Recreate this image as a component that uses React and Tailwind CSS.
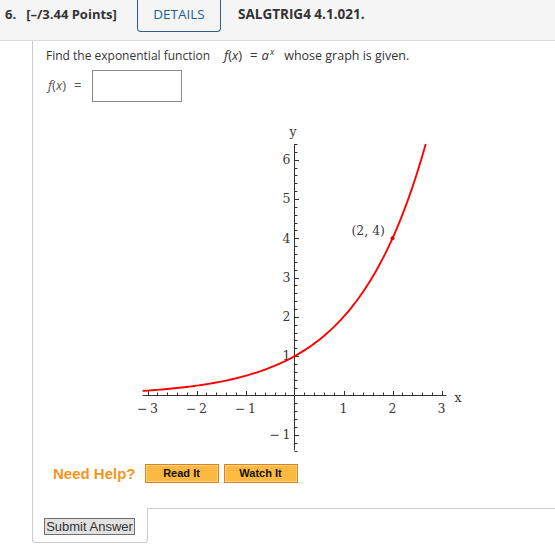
import React from "react";

const OX = 294.5;
const OY = 393.5;
const UX = 49;
const UY = 39.3;
const px = (x) => OX + x * UX;
const py = (y) => OY - y * UY;

function Graph() {
  const xTicks = [];
  for (let i = -15; i <= 15; i++) {
    if (i === 0) continue;
    const major = i % 5 === 0;
    const x = Math.round(px(i * 0.2)) + 0.5;
    xTicks.push(<line key={"x" + i} x1={x} x2={x} y1={OY} y2={OY - (major ? 4.5 : 3)} stroke="#333" strokeWidth="1" />);
  }
  const yTicks = [];
  for (let j = -7; j <= 32; j++) {
    if (j === 0) continue;
    const major = j % 5 === 0;
    const y = Math.round(py(j * 0.2)) + 0.5;
    yTicks.push(<line key={"y" + j} x1={OX} x2={OX + (major ? 4.5 : 3)} y1={y} y2={y} stroke="#333" strokeWidth="1" />);
  }
  const pts = [];
  const xEnd = Math.log2(6.4);
  for (let x = -3.1; x < xEnd; x += 0.05) pts.push([px(x), py(Math.pow(2, x))]);
  pts.push([px(xEnd), py(6.4)]);
  const d = pts.map((p, k) => (k ? "L" : "M") + p[0].toFixed(2) + " " + p[1].toFixed(2)).join(" ");
  const font = { fontFamily: "'DejaVu Serif', 'Liberation Serif', serif", fontSize: 12.5, fill: "#3a3a3a" };
  const neg = (v) => (v < 0 ? "\u2212" + "\u2009" + -v : String(v));
  return (
    <svg width="340" height="340" viewBox="130 112 340 340" className="block">
      <line x1={px(-3.1)} x2={px(3.1)} y1={OY} y2={OY} stroke="#333" strokeWidth="1" />
      <line x1={OX} x2={OX} y1={py(6.4)} y2={py(-1.4)} stroke="#333" strokeWidth="1" />
      {xTicks}
      {yTicks}
      {[-3, -2, -1, 1, 2, 3].map((v) => (
        <text key={"lx" + v} x={px(v)} y={411} textAnchor="middle" style={font}>
          {neg(v)}
        </text>
      ))}
      {[-1, 1, 2, 3, 4, 5, 6].map((v) => (
        <text key={"ly" + v} x={290.5} y={py(v) + 4.2} textAnchor="end" style={font}>
          {neg(v)}
        </text>
      ))}
      <text x={293} y={133.5} textAnchor="middle" style={font}>y</text>
      <text x={458} y={399.5} textAnchor="middle" style={font}>x</text>
      <path d={d} fill="none" stroke="#ff0000" strokeWidth="1.9" />
      <circle cx={px(2)} cy={py(4)} r="2" fill="#e00000" />
      <text x={385} y={233} textAnchor="end" style={font}>(2, 4)</text>
    </svg>
  );
}

export default function App() {
  return (
    <div className="w-[555px] h-[547px] bg-white overflow-hidden font-['Open_Sans',sans-serif] text-[#333]">
      <div className="h-[41px] bg-[#f5f5f5] border-b border-[#dcdcdc] flex items-start">
        <div className="w-[137px] shrink-0 pl-[5px] pt-[5px] text-[13px] leading-[18px] font-bold text-[#333] flex">
          <span>6.</span>
          <span className="ml-[10px]">[–/3.44 Points]</span>
        </div>
        <div className="w-[84px] shrink-0 h-[32px] border border-t-0 border-[#2b5d8c] rounded-b-[4px] flex justify-center pt-[5px] text-[13.5px] leading-[18px] font-medium text-[#1d5f96]">
          DETAILS
        </div>
        <div className="ml-[17px] pt-[5px] text-[13.5px] leading-[18px] font-bold text-[#333]">SALGTRIG4 4.1.021.</div>
      </div>
      <div className="ml-[32px]">
        <div className="border-l border-[#cccccc] pl-[13px] pt-[5px] pb-[23px]">
          <div className="text-[12px] leading-[18px] text-[#333] flex items-baseline whitespace-pre">
            <span>Find the exponential function</span>
            <span className="ml-[14px] text-[13px]">
              <span className="italic">f</span>(<span className="italic">x</span>)
            </span>
            <span className="ml-[8px] text-[13px]">=</span>
            <span className="ml-[4px] text-[13px] italic">a</span>
            <span className="italic text-[9px] relative top-[-5px] ml-[1px]">x</span>
            <span className="ml-[10px] text-[12.5px]">whose graph is given.</span>
          </div>
          <div className="flex items-center mt-[4px] h-[32px]">
            <span className="ml-[2px] text-[13px] text-[#555]">
              <span className="italic">f</span>(<span className="italic">x</span>)
            </span>
            <span className="ml-[8px] text-[13px] text-[#555]">=</span>
            <div className="ml-[11px] w-[90px] h-[32px] border border-[#8a8a8a] bg-white"></div>
          </div>
          <div className="mt-[12px] ml-[84px]">
            <Graph />
          </div>
          <div className="mt-[10px] mb-[2px] flex items-center h-[19px] font-['Liberation_Sans',Arial,sans-serif]">
            <span className="ml-[7px] text-[15px] font-bold text-[#f7941e] leading-[19px]">Need Help?</span>
            <button className="ml-[9px] w-[74px] h-[19px] border border-[#dd8024] bg-[#fdb942] shadow-[inset_0_0_0_1px_#ffd27a] text-[11px] font-bold text-[#111] flex items-center justify-center leading-none">
              Read It
            </button>
            <button className="ml-[5px] w-[74px] h-[19px] border border-[#dd8024] bg-[#fdb942] shadow-[inset_0_0_0_1px_#ffd27a] text-[11px] font-bold text-[#111] flex items-center justify-center leading-none">
              Watch It
            </button>
          </div>
        </div>
        <div className="flex">
          <div className="w-[116px] h-[35px] border-l border-r border-b border-[#cccccc] rounded-b-[3px] pl-[11px] pt-[10px]">
            <button className="w-[91px] h-[17px] border border-[#707070] bg-[#e1e1e1] text-[13px] leading-none text-[#333] font-['Liberation_Sans',Arial,sans-serif] flex items-center justify-center">
              Submit Answer
            </button>
          </div>
          <div className="flex-1 border-t border-[#cccccc] -ml-px"></div>
        </div>
      </div>
    </div>
  );
}
